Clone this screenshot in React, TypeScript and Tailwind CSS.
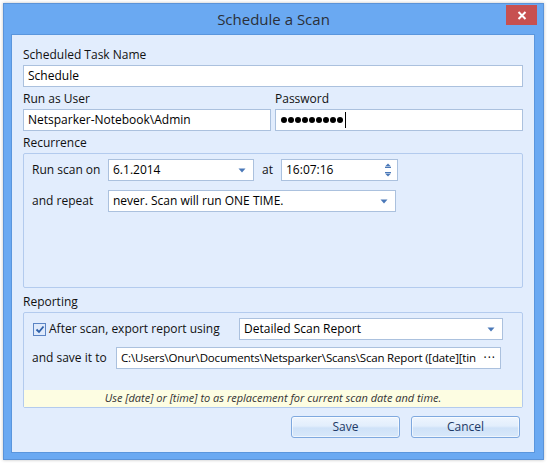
import React from "react";

const font = { fontFamily: '"Open Sans", "Noto Sans", sans-serif' };

function DownArrow() {
  return (
    <svg width="8" height="5" viewBox="0 0 8 5" className="shrink-0">
      <path d="M0.5 0.5 H7.5 L4 4.5 Z" fill="#4a78b8" />
    </svg>
  );
}

function Combo({ value, w }: { value: string; w: string }) {
  return (
    <div className={`${w} h-[22px] bg-white border border-[#abc1de] flex items-center pl-[4px] pr-[7px] text-[12px] text-black`}>
      <span className="flex-1 whitespace-nowrap overflow-hidden">{value}</span>
      <DownArrow />
    </div>
  );
}

function TextBox({ value, className = "" }: { value: React.ReactNode; className?: string }) {
  return (
    <div className={`h-[22px] bg-white border border-[#abc1de] flex items-center pl-[4px] text-[12px] text-black ${className}`}>
      {value}
    </div>
  );
}

function Label({ children }: { children: React.ReactNode }) {
  return <div className="h-[16px] leading-[16px] text-[12px] text-[#111] whitespace-nowrap">{children}</div>;
}

function Button({ children, w }: { children: React.ReactNode; w: string }) {
  return (
    <div
      className={`${w} h-[22px] rounded-[3px] border border-[#7fa9df] bg-[linear-gradient(to_bottom,#eef5fe_0%,#e2eefc_45%,#cfe2f8_55%,#d8e8fa_100%)] shadow-[inset_0_0_0_1px_rgba(255,255,255,0.6)] flex items-center justify-center text-[12px] text-[#1e3a66]`}
    >
      {children}
    </div>
  );
}

export default function App() {
  return (
    <div className="w-[548px] h-[465px] bg-white relative overflow-hidden" style={font}>
      <div className="absolute left-[3px] top-[3px] w-[541px] h-[457px] bg-[#6aa9f2] border border-[#5b93d8] shadow-[0_0_3px_rgba(0,0,0,0.25)] flex flex-col">
        <div className="h-[30px] flex items-center justify-center text-[15px] text-[#2a2f38] relative">
          Schedule a Scan
          <div className="absolute right-[6px] top-[1px] w-[31px] h-[20px] bg-[#c75050] flex items-center justify-center">
            <svg width="10" height="9" viewBox="0 0 10 9">
              <path d="M1.5 1 L8.5 8 M8.5 1 L1.5 8" stroke="#ffffff" strokeWidth="2" />
            </svg>
          </div>
        </div>
        <div className="ml-[7px] mr-[8px] h-[419px] bg-[#e2edfd] border border-[#5a96dd] flex flex-col px-[11px] pt-[12px]">
          <Label>Scheduled Task Name</Label>
          <TextBox value="Schedule" className="mt-[2px] w-full" />
          <div className="flex gap-[4px] mt-[4px]">
            <div className="w-[248px] flex flex-col gap-[2px]">
              <Label>Run as User</Label>
              <TextBox value="Netsparker-Notebook\Admin" />
            </div>
            <div className="flex-1 flex flex-col gap-[2px]">
              <Label>Password</Label>
              <TextBox
                value={
                  <div className="flex items-center gap-[1px] pl-[1px]">
                    {[0, 1, 2, 3, 4, 5, 6, 7, 8].map((i) => (
                      <span key={i} className="w-[6px] h-[6px] rounded-full bg-black" />
                    ))}
                    <span className="ml-[1px] w-[1px] h-[16px] bg-black" />
                  </div>
                }
              />
            </div>
          </div>
          <div className="mt-[4px]">
            <Label>Recurrence</Label>
          </div>
          <div className="mt-[2px] h-[135px] border border-[#b3cbee] rounded-[2px] flex flex-col pl-[8px] pt-[5px] gap-[9px]">
            <div className="flex items-center">
              <span className="w-[76px] text-[12px] text-[#111]">Run scan on</span>
              <Combo value="6.1.2014" w="w-[146px]" />
              <span className="w-[27px] pl-[8px] text-[12px] text-[#111]">at</span>
              <div className="w-[117px] h-[22px] bg-white border border-[#abc1de] flex items-center pl-[4px] pr-[5px] text-[12px] text-black">
                <span className="flex-1">16:07:16</span>
                <svg width="8" height="16" viewBox="0 0 8 16">
                  <path d="M4 1.5 L7 4.5 H1 Z" fill="#4a78b8" />
                  <path d="M1 5.5 H7" stroke="#4a78b8" strokeWidth="1" />
                  <path d="M1 10.5 H7" stroke="#4a78b8" strokeWidth="1" />
                  <path d="M1 11.5 H7 L4 14.5 Z" fill="#4a78b8" />
                </svg>
              </div>
            </div>
            <div className="flex items-center">
              <span className="w-[76px] text-[12px] text-[#111]">and repeat</span>
              <Combo value="never. Scan will run ONE TIME." w="w-[288px]" />
            </div>
          </div>
          <div className="mt-[6px]">
            <Label>Reporting</Label>
          </div>
          <div className="mt-[2px] h-[96px] border border-[#b3cbee] rounded-[2px] flex flex-col pt-[5px]">
            <div className="flex items-center pl-[9px]">
              <div className="w-[13px] h-[13px] border border-[#5b84c4] bg-[#dfeafb] flex items-center justify-center">
                <svg width="10" height="9" viewBox="0 0 10 9">
                  <path d="M1.5 4.5 L4 7 L8.5 1.5" stroke="#2d5fa8" strokeWidth="1.8" fill="none" />
                </svg>
              </div>
              <span className="ml-[3px] w-[190px] text-[12px] text-[#111] whitespace-nowrap">After scan, export report using</span>
              <Combo value="Detailed Scan Report" w="w-[264px]" />
            </div>
            <div className="flex items-center pl-[8px] mt-[7px]">
              <span className="w-[84px] text-[12px] text-[#111] whitespace-nowrap">and save it to</span>
              <div className="w-[385px] h-[22px] bg-white border border-[#abc1de] flex items-center pl-[4px] pr-[4px] text-black">
                <span className="flex-1 whitespace-nowrap text-[11.5px] tracking-[-0.18px]">
                  C:\Users\Onur\Documents\Netsparker\Scans\Scan Report ([date][tin
                </span>
                <span className="pl-[2px] text-[12px] tracking-[1px]">···</span>
              </div>
            </div>
            <div className="mt-auto h-[17px] bg-[#fdfde2] flex items-center justify-center text-[11px] italic text-[#333]">
              Use [date] or [time] to as replacement for current scan date and time.
            </div>
          </div>
          <div className="mt-[8px] flex justify-end gap-[11px] pr-[3px]">
            <Button w="w-[109px]">Save</Button>
            <Button w="w-[109px]">Cancel</Button>
          </div>
        </div>
      </div>
    </div>
  );
}
